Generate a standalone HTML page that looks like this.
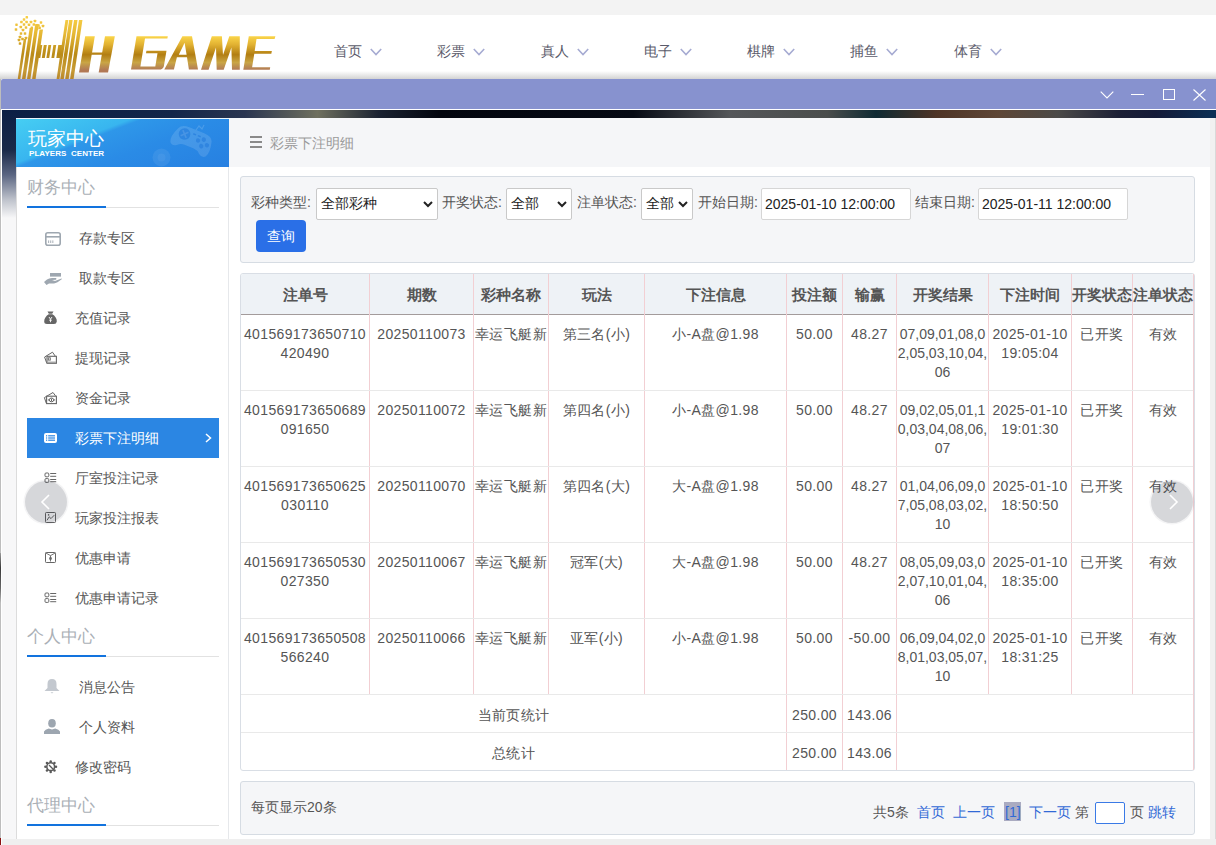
<!DOCTYPE html>
<html><head><meta charset="utf-8"><style>
*{box-sizing:border-box}
html,body{margin:0;padding:0}
body{width:1216px;height:845px;overflow:hidden;position:relative;background:#f3f3f3;font-family:"Liberation Sans",sans-serif;font-size:14px;color:#555}
.a{position:absolute}
.t{position:absolute;white-space:nowrap;line-height:19px}
.nav{color:#5b5b6b;font-size:14px}
.side{color:#555;font-size:14px}
.sec{color:#aab0b6;font-size:17px;line-height:22px}
.lbl{color:#555;font-size:14px}
.cell{position:absolute;text-align:center;line-height:19px;color:#555;letter-spacing:0.35px}
.hd{position:absolute;text-align:center;font-weight:bold;font-size:15px;color:#555;line-height:19px}
.lnk{color:#3169d6}
svg{position:absolute;overflow:visible}
</style></head><body>
<div class="a" style="left:0px;top:15px;width:1216px;height:64px;background:#fff"></div>
<div class="a" style="left:0px;top:71px;width:1216px;height:8px;background:linear-gradient(#fff,#d3d3d3)"></div>
<svg style="left:0;top:0" width="300" height="80" viewBox="0 0 300 80">
<defs>
<linearGradient id="gt" gradientUnits="userSpaceOnUse" x1="0" y1="36" x2="0" y2="70">
<stop offset="0" stop-color="#fbd64a"/><stop offset="0.25" stop-color="#e2b232"/><stop offset="0.55" stop-color="#b27e12"/><stop offset="0.78" stop-color="#c9a545"/><stop offset="0.92" stop-color="#b98952"/><stop offset="1" stop-color="#b27955"/>
</linearGradient>
<linearGradient id="gh" gradientUnits="userSpaceOnUse" x1="0" y1="17" x2="0" y2="79">
<stop offset="0" stop-color="#f8cf45"/><stop offset="0.3" stop-color="#e3b533"/><stop offset="0.6" stop-color="#b98a17"/><stop offset="0.85" stop-color="#c89c35"/><stop offset="1" stop-color="#b8862a"/>
</linearGradient>
</defs>
<g fill="url(#gh)">
<polygon points="23.7,39 26.3,39 20.3,79 17.7,79"/>
<polygon points="29.65,28 33.15,28 25.5,79 22,79"/>
<polygon points="35.25,24 38.65,24 30.4,79 27,79"/>
<polygon points="39.5,29.6 43,29.6 35.6,79 32.1,79"/>
<polygon points="38.3,45 42.3,45 40.3,58 36.3,58"/>
<polygon points="43.8,45 46.8,45 44.8,58 41.8,58"/>
<polygon points="48.4,45 51.2,45 49.2,58 46.4,58"/>
<polygon points="53.4,45 56.2,45 54.2,58 51.4,58"/>
<polygon points="58.3,45 62.5,45 60.5,58 56.3,58"/>
<polygon points="65.45,20 68.35,20 59.5,79 56.6,79"/>
<polygon points="69.15,20 72.65,20 63.8,79 60.3,79"/>
<polygon points="74.05,20 77.55,20 68.7,79 65.2,79"/>
<polygon points="78.95,20 82.45,20 73.6,79 70.1,79"/>
<g>
<rect x="25.55" y="16.05" width="2.5" height="2.5" rx="0.6"/><rect x="22.75" y="18.35" width="2.5" height="2.5" rx="0.6"/><rect x="20.15" y="20.75" width="2.5" height="2.5" rx="0.6"/><rect x="25.35" y="20.75" width="2.5" height="2.5" rx="0.6"/><rect x="29.75" y="20.75" width="2.5" height="2.5" rx="0.6"/><rect x="33.75" y="19.75" width="2.5" height="2.5" rx="0.6"/><rect x="39.75" y="21.15" width="2.5" height="2.5" rx="0.6"/><rect x="15.25" y="23.45" width="2.5" height="2.5" rx="0.6"/><rect x="22.75" y="23.25" width="2.5" height="2.5" rx="0.6"/><rect x="27.75" y="23.55" width="2.5" height="2.5" rx="0.6"/><rect x="32.55" y="23.25" width="2.5" height="2.5" rx="0.6"/><rect x="19.55" y="25.75" width="2.5" height="2.5" rx="0.6"/><rect x="24.75" y="26.25" width="2.5" height="2.5" rx="0.6"/><rect x="30.55" y="26.45" width="2.5" height="2.5" rx="0.6"/><rect x="41.75" y="24.75" width="2.5" height="2.5" rx="0.6"/><rect x="38.35" y="26.55" width="2.5" height="2.5" rx="0.6"/><rect x="14.75" y="28.25" width="2.5" height="2.5" rx="0.6"/><rect x="21.75" y="28.75" width="2.5" height="2.5" rx="0.6"/><rect x="19.75" y="32.25" width="2.5" height="2.5" rx="0.6"/><rect x="23.75" y="32.25" width="2.5" height="2.5" rx="0.6"/><rect x="18.75" y="35.75" width="2.5" height="2.5" rx="0.6"/><rect x="24.75" y="36.75" width="2.5" height="2.5" rx="0.6"/><rect x="21.25" y="37.75" width="2.5" height="2.5" rx="0.6"/><rect x="17.75" y="38.75" width="2.5" height="2.5" rx="0.6"/><rect x="18.75" y="42.35" width="2.5" height="2.5" rx="0.6"/><rect x="35.75" y="27.75" width="2.5" height="2.5" rx="0.6"/><rect x="37.25" y="24.25" width="2.5" height="2.5" rx="0.6"/></g></g>
<g fill="url(#gt)" fill-rule="evenodd">
<polygon points="85.2,36.2 94.8,36.2 88.7,72.5 79,72.5"/>
<polygon points="105,36.2 114.8,36.2 108,72.5 98.7,72.5"/>
<polygon points="91.5,52.4 104,52.4 103.6,54.8 91.1,54.8"/>
<path d="M136.5,36.2 L167.8,36.2 L167.4,38.6 L145,38.6 L140.4,66.6 L155.3,66.6 L157.5,53.3 L146,53.3 L146.4,50.8 L166.5,50.8 L163.8,66.5 Q163,69.6 159,69.6 L131,69.6 Z"/>
<path d="M182.4,36.2 L192,36.2 L198,69.6 L188.9,69.6 L187,57.3 L176.9,57.3 L173.9,69.6 L164.3,69.6 Z M178.8,54.8 L186.6,54.8 L184.6,42.8 Z"/>
<path d="M201,69.8 L211.8,36.2 L221.9,36.2 L223,55 L229.3,36.2 L239.8,36.2 L239.8,69.8 L232,69.8 L231.4,47.4 L223.7,69.8 L216.7,69.8 L216,47.4 L208.6,69.8 Z"/>
<path d="M248.8,36.2 L275.4,36.2 L274.6,39 L256.5,39 L254.7,50.9 L271.9,50.9 L271.3,53.7 L254.3,53.7 L252.1,67.3 L270.2,67.3 L269.8,69.8 L243.3,69.8 Z"/>
</g>
</svg>
<div class="t nav" style="left:334px;top:42px;">首页</div>
<svg style="left:370px;top:48px" width="12" height="8" viewBox="0 0 12 8"><path d="M0.8 1 L6 6.5 L11.2 1" fill="none" stroke="#a6abd2" stroke-width="1.6"/></svg>
<div class="t nav" style="left:437px;top:42px;">彩票</div>
<svg style="left:473px;top:48px" width="12" height="8" viewBox="0 0 12 8"><path d="M0.8 1 L6 6.5 L11.2 1" fill="none" stroke="#a6abd2" stroke-width="1.6"/></svg>
<div class="t nav" style="left:541px;top:42px;">真人</div>
<svg style="left:577px;top:48px" width="12" height="8" viewBox="0 0 12 8"><path d="M0.8 1 L6 6.5 L11.2 1" fill="none" stroke="#a6abd2" stroke-width="1.6"/></svg>
<div class="t nav" style="left:644px;top:42px;">电子</div>
<svg style="left:680px;top:48px" width="12" height="8" viewBox="0 0 12 8"><path d="M0.8 1 L6 6.5 L11.2 1" fill="none" stroke="#a6abd2" stroke-width="1.6"/></svg>
<div class="t nav" style="left:747px;top:42px;">棋牌</div>
<svg style="left:783px;top:48px" width="12" height="8" viewBox="0 0 12 8"><path d="M0.8 1 L6 6.5 L11.2 1" fill="none" stroke="#a6abd2" stroke-width="1.6"/></svg>
<div class="t nav" style="left:850px;top:42px;">捕鱼</div>
<svg style="left:886px;top:48px" width="12" height="8" viewBox="0 0 12 8"><path d="M0.8 1 L6 6.5 L11.2 1" fill="none" stroke="#a6abd2" stroke-width="1.6"/></svg>
<div class="t nav" style="left:954px;top:42px;">体育</div>
<svg style="left:990px;top:48px" width="12" height="8" viewBox="0 0 12 8"><path d="M0.8 1 L6 6.5 L11.2 1" fill="none" stroke="#a6abd2" stroke-width="1.6"/></svg>
<div class="a" style="left:0px;top:79px;width:1px;height:766px;background:#bdbdbd"></div>
<div class="a" style="left:1px;top:79px;width:1215px;height:766px;background:#fff;border-top-left-radius:2px"></div>
<div class="a" style="left:1px;top:79px;width:1215px;height:30px;background:#8792cf;border-top-left-radius:2px"></div>
<svg style="left:1100px;top:91px" width="14" height="8" viewBox="0 0 14 8"><path d="M0.7 0.7 L7 7 L13.3 0.7" fill="none" stroke="#fff" stroke-width="1.1"/></svg>
<div class="a" style="left:1131px;top:94px;width:13px;height:1px;background:#fff"></div>
<div class="a" style="left:1163px;top:89px;width:12px;height:11px;border:1.2px solid #fff"></div>
<svg style="left:1193px;top:89px" width="13" height="12" viewBox="0 0 13 12"><path d="M0.5 0.5 L12.5 11.5 M12.5 0.5 L0.5 11.5" fill="none" stroke="#fff" stroke-width="1.1"/></svg>
<div class="a" style="left:2px;top:110px;width:1214px;height:735px;background:#f7f7f8"></div>
<div class="a" style="left:2px;top:110px;width:1214px;height:8px;background:linear-gradient(90deg,#0b1f44 0%,#13264a 14%,#2a3550 20%,#6f705f 26%,#1b2332 31%,#03060f 36%,#060a14 52%,#55575a 60%,#4a4d4c 68%,#0f2a33 72%,#4e3426 77%,#5e4636 82%,#4b4a48 87%,#1c2036 92%,#141a38 95%,#0a2f55 100%)"></div>
<div class="a" style="left:2px;top:110px;width:14px;height:110px;background:linear-gradient(#0b1f44 0px,#1a2948 40px,#5b6682 65px,#bfc3cc 90px,#f7f7f8 108px)"></div>
<div class="a" style="left:1210px;top:110px;width:6px;height:8px;background:#0a2f55"></div>
<div class="a" style="left:1210px;top:118px;width:6px;height:721px;background:#f1f1f1;border-right:1px solid #d9d9d9"></div>
<div class="a" style="left:0px;top:838px;width:1px;height:7px;background:#8a1010"></div>
<div class="a" style="left:0px;top:553px;width:1px;height:50px;background:linear-gradient(#9a9a9a,#3a3a3a 30%,#666 70%,#bdbdbd)"></div>
<div class="a" style="left:2px;top:839px;width:1214px;height:6px;background:#efefef"></div>
<div class="a" style="left:16px;top:118px;width:213px;height:721px;background:#fff;border-left:1px solid #dcdcdc;border-right:1px solid #e6e8eb"></div>
<div class="a" style="left:16px;top:118px;width:213px;height:49px;background:linear-gradient(159deg,#46cef3 0%,#38b5ef 34%,#2e97e9 37.5%,#2a8be6 60%,#2780e1 100%);border-top:1px solid #e9f4fb"></div>
<svg style="left:140px;top:119px" width="89" height="48" viewBox="140 119 89 48">
<g transform="translate(-2 3)"><g transform="rotate(22 193 139)">
<path d="M176,131 Q178,126 186,126 L202,126 Q210,126 212,131 Q215,142 212,147 Q209,150 205,147 Q202,144 198,144 L188,144 Q184,144 181,147 Q177,150 174,147 Q171,142 176,131 Z" fill="rgba(255,255,255,0.13)"/>
<circle cx="184" cy="134" r="5.8" fill="rgba(20,110,215,0.45)"/>
<path d="M181,131 L187,137 M187,131 L181,137" stroke="rgba(255,255,255,0.12)" stroke-width="1.6"/>
<path d="M192,130.5 L195,130.5 M197,130.5 L200,130.5" stroke="rgba(20,110,215,0.45)" stroke-width="1.6"/>
<circle cx="204" cy="132" r="2.2" fill="rgba(20,110,215,0.4)"/><circle cx="209" cy="136" r="2.2" fill="rgba(20,110,215,0.4)"/>
<circle cx="204" cy="139" r="2.2" fill="rgba(20,110,215,0.4)"/><circle cx="199" cy="135" r="2.2" fill="rgba(20,110,215,0.4)"/>
</g>
<path d="M198,127 L201,123 L204,126 L206,122" fill="none" stroke="rgba(255,255,255,0.15)" stroke-width="1.2"/></g>
<circle cx="161.5" cy="157.5" r="9" fill="rgba(255,255,255,0.07)"/>
<circle cx="161.5" cy="157.5" r="4" fill="rgba(255,255,255,0.05)"/>
</svg>
<div class="t " style="left:28px;top:128px;color:#fff;font-size:19px;line-height:22px">玩家中心</div>
<div class="t " style="left:29px;top:149px;color:#fff;font-size:8px;line-height:9px;letter-spacing:0.05px;font-weight:bold">PLAYERS&nbsp;&nbsp;CENTER</div>
<div class="t sec" style="left:27px;top:177px;">财务中心</div>
<div class="a" style="left:27px;top:207px;width:192px;height:1px;background:#e2e2e2"></div>
<div class="a" style="left:27px;top:206px;width:79px;height:2px;background:#1273de"></div>
<div class="t side" style="left:79px;top:229px;">存款专区</div>
<svg style="left:45px;top:232px" width="16" height="14" viewBox="0 0 16 14"><rect x="0.8" y="0.8" width="14.4" height="12.4" rx="2" fill="none" stroke="#9ea7b0" stroke-width="1.6"/><rect x="0.8" y="4" width="14.4" height="1.6" fill="#9ea7b0"/><rect x="3.2" y="8.4" width="0.9" height="2.6" fill="#9ea7b0"/><rect x="5.3" y="8.4" width="0.9" height="2.6" fill="#9ea7b0"/><rect x="7.4" y="8.4" width="0.9" height="2.6" fill="#9ea7b0"/></svg>
<div class="t side" style="left:79px;top:269px;">取款专区</div>
<svg style="left:44px;top:273px" width="18" height="12" viewBox="0 0 18 12"><rect x="6" y="0" width="11" height="3.6" fill="#9ea7b0"/><path d="M0,9 L3,6.5 Q5,5 8,5 L12,5 Q13,5.5 12,6.8 L8,7 L11,8 L17.5,5.5 L18,6 Q13,10 10,10.5 L5,10.5 L2.5,12 Z" fill="#9ea7b0"/></svg>
<div class="t side" style="left:75px;top:309px;">充值记录</div>
<svg style="left:44px;top:311px" width="13" height="13" viewBox="0 0 13 13"><path d="M3.5,0.5 L9.5,0.5 L8,3 Q13,6 12.8,10.5 Q12.5,13 10,13 L3,13 Q0.2,13 0.2,10.5 Q0.2,6 5,3 Z" fill="#666"/><path d="M5,6 L6.5,8.2 L8,6 M6.5,8.2 L6.5,11.2 M5.2,9.2 L7.8,9.2" fill="none" stroke="#fff" stroke-width="0.9"/><rect x="4.6" y="2.7" width="3.8" height="0.6" fill="#ddd"/></svg>
<div class="t side" style="left:75px;top:349px;">提现记录</div>
<svg style="left:44px;top:351px" width="13" height="13" viewBox="0 0 13 13"><path d="M2.6,11.8 L0.6,6 L8.5,1.2 L11.2,5" fill="none" stroke="#666" stroke-width="1"/><rect x="3" y="5.3" width="9.4" height="7" fill="#fff" stroke="#666" stroke-width="1.1"/><rect x="4.3" y="6.8" width="2" height="2.3" fill="none" stroke="#666" stroke-width="0.9"/><rect x="3.5" y="10.6" width="8.4" height="1.2" fill="#999"/></svg>
<div class="t side" style="left:75px;top:389px;">资金记录</div>
<svg style="left:44px;top:392px" width="13" height="12" viewBox="0 0 13 12"><path d="M2.4,11.5 L0.4,5.6 L9,0.5 L11.5,3.8" fill="none" stroke="#666" stroke-width="1"/><rect x="2.6" y="4.2" width="9.8" height="7.4" fill="#fff" stroke="#666" stroke-width="1.1"/><ellipse cx="7.5" cy="7.9" rx="2.2" ry="1.9" fill="none" stroke="#666" stroke-width="1"/><rect x="7" y="6.6" width="1" height="2.6" fill="#666"/><circle cx="4.4" cy="7.9" r="0.6" fill="#666"/><circle cx="10.6" cy="7.9" r="0.6" fill="#666"/></svg>
<div class="a" style="left:27px;top:418px;width:192px;height:40px;background:#2b86e3"></div>
<div class="t side" style="left:75px;top:429px;color:#fff">彩票下注明细</div>
<svg style="left:205px;top:433px" width="7" height="10" viewBox="0 0 7 10"><path d="M1 1 L5.5 5 L1 9" fill="none" stroke="#fff" stroke-width="1.5"/></svg>
<svg style="left:44px;top:433px" width="13" height="10" viewBox="0 0 13 10"><rect x="0" y="0" width="13" height="10" rx="2" fill="#fff"/><rect x="2" y="2.2" width="1.2" height="1.2" fill="#2b86e3"/><rect x="2" y="4.4" width="1.2" height="1.2" fill="#2b86e3"/><rect x="2" y="6.6" width="1.2" height="1.2" fill="#2b86e3"/><rect x="4.2" y="2.2" width="6.8" height="1.2" fill="#2b86e3"/><rect x="4.2" y="4.4" width="6.8" height="1.2" fill="#2b86e3"/><rect x="4.2" y="6.6" width="6.8" height="1.2" fill="#2b86e3"/></svg>
<div class="t side" style="left:75px;top:469px;">厅室投注记录</div>
<svg style="left:44px;top:472px" width="13" height="11" viewBox="0 0 13 11"><rect x="1" y="1" width="3.8" height="3.8" rx="1" fill="none" stroke="#666" stroke-width="1"/><rect x="1" y="6.6" width="3.8" height="3.8" rx="1" fill="none" stroke="#666" stroke-width="1"/><rect x="6.2" y="1" width="6" height="1" fill="#666"/><rect x="6.2" y="3.8" width="6" height="1" fill="#666"/><rect x="6.2" y="7" width="6" height="1" fill="#666"/><rect x="6.2" y="9.2" width="6" height="1" fill="#666"/></svg>
<div class="t side" style="left:75px;top:509px;">玩家投注报表</div>
<svg style="left:45px;top:512px" width="11" height="11" viewBox="0 0 11 11"><rect x="0.5" y="0.5" width="10" height="10" rx="0.8" fill="none" stroke="#666" stroke-width="1"/><path d="M2,8.3 L4.2,4.8 L6,6.6 L9.2,3.2" fill="none" stroke="#666" stroke-width="1"/><circle cx="3.6" cy="2.9" r="0.8" fill="#666"/></svg>
<div class="t side" style="left:75px;top:549px;">优惠申请</div>
<svg style="left:45px;top:552px" width="11" height="11" viewBox="0 0 11 11"><rect x="0.5" y="0.5" width="10" height="10" rx="0.8" fill="none" stroke="#666" stroke-width="1"/><path d="M0.8,1 L5.5,3.6 L10.2,1 M5.5,3.6 L5.5,9.5" fill="none" stroke="#666" stroke-width="0.9"/><ellipse cx="5.5" cy="6.4" rx="1.3" ry="1.7" fill="#666"/></svg>
<div class="t side" style="left:75px;top:589px;">优惠申请记录</div>
<svg style="left:44px;top:592px" width="13" height="11" viewBox="0 0 13 11"><rect x="1" y="1" width="3.8" height="3.8" rx="1" fill="none" stroke="#666" stroke-width="1"/><rect x="1" y="6.6" width="3.8" height="3.8" rx="1" fill="none" stroke="#666" stroke-width="1"/><rect x="6.2" y="1" width="6" height="1" fill="#666"/><rect x="6.2" y="3.8" width="6" height="1" fill="#666"/><rect x="6.2" y="7" width="6" height="1" fill="#666"/><rect x="6.2" y="9.2" width="6" height="1" fill="#666"/></svg>
<div class="t sec" style="left:27px;top:626px;">个人中心</div>
<div class="a" style="left:27px;top:656px;width:192px;height:1px;background:#e2e2e2"></div>
<div class="a" style="left:27px;top:655px;width:79px;height:2px;background:#1273de"></div>
<div class="t side" style="left:79px;top:678px;">消息公告</div>
<svg style="left:44px;top:679px" width="16" height="15" viewBox="0 0 16 15"><path d="M8,0 Q12.5,0 12.5,5 L12.5,9 L15.5,12 L0.5,12 L3.5,9 L3.5,5 Q3.5,0 8,0 Z" fill="#c3c8cf"/><path d="M6.5,13.3 L9.5,13.3 L8,14.6 Z" fill="#c3c8cf"/></svg>
<div class="t side" style="left:79px;top:718px;">个人资料</div>
<svg style="left:44px;top:719px" width="16" height="15" viewBox="0 0 16 15"><ellipse cx="8" cy="4.2" rx="3.8" ry="4.3" fill="#9da6b0"/><path d="M0,15 L0,12.5 Q1,10.5 4.8,9.6 Q8,11.2 11.2,9.6 Q15,10.5 16,12.5 L16,15 Z" fill="#9da6b0"/></svg>
<div class="t side" style="left:75px;top:758px;">修改密码</div>
<svg style="left:44px;top:760px" width="14" height="14" viewBox="0 0 14 14"><g fill="#5a5a5a"><circle cx="12.00" cy="6.70" r="1.25"/><circle cx="10.45" cy="10.45" r="1.25"/><circle cx="6.70" cy="12.00" r="1.25"/><circle cx="2.95" cy="10.45" r="1.25"/><circle cx="1.40" cy="6.70" r="1.25"/><circle cx="2.95" cy="2.95" r="1.25"/><circle cx="6.70" cy="1.40" r="1.25"/><circle cx="10.45" cy="2.95" r="1.25"/></g><circle cx="6.7" cy="6.7" r="3.9" fill="none" stroke="#5a5a5a" stroke-width="1.6"/><path d="M5,5 L9.2,9.2" stroke="#5a5a5a" stroke-width="1.3"/></svg>
<div class="t sec" style="left:27px;top:795px;">代理中心</div>
<div class="a" style="left:27px;top:825px;width:192px;height:1px;background:#e2e2e2"></div>
<div class="a" style="left:27px;top:824px;width:79px;height:2px;background:#1273de"></div>
<div class="a" style="left:229px;top:118px;width:981px;height:49px;background:#f5f6f8"></div>
<div class="a" style="left:229px;top:167px;width:981px;height:672px;background:#fff"></div>
<div class="a" style="left:250px;top:136px;width:12px;height:2px;background:#8a8a8a"></div>
<div class="a" style="left:250px;top:141px;width:12px;height:2px;background:#8a8a8a"></div>
<div class="a" style="left:250px;top:146px;width:12px;height:2px;background:#8a8a8a"></div>
<div class="t " style="left:270px;top:134px;color:#9a9a9a;font-size:14px">彩票下注明细</div>
<div class="a" style="left:240px;top:176px;width:955px;height:87px;background:#f5f6f8;border:1px solid #d6dce3;border-radius:3px"></div>
<div class="t lbl" style="left:251px;top:193px;">彩种类型:</div>
<div class="t lbl" style="left:442px;top:193px;">开奖状态:</div>
<div class="t lbl" style="left:577px;top:193px;">注单状态:</div>
<div class="t lbl" style="left:698px;top:193px;">开始日期:</div>
<div class="t lbl" style="left:915px;top:193px;">结束日期:</div>
<div class="a" style="left:316px;top:188px;width:122px;height:32px;background:#fff;border:1px solid #c9c9c9;border-radius:2px"></div>
<div class="t " style="left:321px;top:194px;color:#222;font-size:14px">全部彩种</div>
<svg style="left:423px;top:201px" width="10" height="7" viewBox="0 0 10 7"><path d="M1 1 L5 5 L9 1" fill="none" stroke="#222" stroke-width="2"/></svg>
<div class="a" style="left:506px;top:188px;width:66px;height:32px;background:#fff;border:1px solid #c9c9c9;border-radius:2px"></div>
<div class="t " style="left:511px;top:194px;color:#222;font-size:14px">全部</div>
<svg style="left:557px;top:201px" width="10" height="7" viewBox="0 0 10 7"><path d="M1 1 L5 5 L9 1" fill="none" stroke="#222" stroke-width="2"/></svg>
<div class="a" style="left:641px;top:188px;width:52px;height:32px;background:#fff;border:1px solid #c9c9c9;border-radius:2px"></div>
<div class="t " style="left:646px;top:194px;color:#222;font-size:14px">全部</div>
<svg style="left:678px;top:201px" width="10" height="7" viewBox="0 0 10 7"><path d="M1 1 L5 5 L9 1" fill="none" stroke="#222" stroke-width="2"/></svg>
<div class="a" style="left:761px;top:188px;width:150px;height:32px;background:#fff;border:1px solid #d6d6d6;border-radius:2px"></div>
<div class="t " style="left:765px;top:195px;color:#222;font-size:14px">2025-01-10 12:00:00</div>
<div class="a" style="left:978px;top:188px;width:150px;height:32px;background:#fff;border:1px solid #d6d6d6;border-radius:2px"></div>
<div class="t " style="left:982px;top:195px;color:#222;font-size:14px">2025-01-11 12:00:00</div>
<div class="a" style="left:256px;top:220px;width:50px;height:32px;background:#2a6fe7;border-radius:4px"></div>
<div class="t " style="left:267px;top:227px;color:#fff;font-size:14px">查询</div>
<div class="a" style="left:240px;top:273px;width:955px;height:498px;background:#fff;border:1px solid #d9dee5;border-radius:3px"></div>
<div class="a" style="left:241px;top:274px;width:952px;height:40px;background:#eef2f6;border-top-left-radius:2px;border-top-right-radius:2px"></div>
<div class="a" style="left:241px;top:314px;width:952px;height:1px;background:#a39b9b"></div>
<div class="a" style="left:369px;top:274px;width:1px;height:420px;background:#f2cfd3"></div>
<div class="a" style="left:473px;top:274px;width:1px;height:420px;background:#f2cfd3"></div>
<div class="a" style="left:548px;top:274px;width:1px;height:420px;background:#f2cfd3"></div>
<div class="a" style="left:644px;top:274px;width:1px;height:420px;background:#f2cfd3"></div>
<div class="a" style="left:786px;top:274px;width:1px;height:420px;background:#f2cfd3"></div>
<div class="a" style="left:842px;top:274px;width:1px;height:420px;background:#f2cfd3"></div>
<div class="a" style="left:896px;top:274px;width:1px;height:420px;background:#f2cfd3"></div>
<div class="a" style="left:988px;top:274px;width:1px;height:420px;background:#f2cfd3"></div>
<div class="a" style="left:1071px;top:274px;width:1px;height:420px;background:#f2cfd3"></div>
<div class="a" style="left:1132px;top:274px;width:1px;height:420px;background:#f2cfd3"></div>
<div class="a" style="left:1193px;top:274px;width:1px;height:420px;background:#f2cfd3"></div>
<div class="a" style="left:786px;top:694px;width:1px;height:76px;background:#f2cfd3"></div>
<div class="a" style="left:842px;top:694px;width:1px;height:76px;background:#f2cfd3"></div>
<div class="a" style="left:896px;top:694px;width:1px;height:76px;background:#f2cfd3"></div>
<div class="a" style="left:1193px;top:694px;width:1px;height:76px;background:#f2cfd3"></div>
<div class="a" style="left:241px;top:390px;width:952px;height:1px;background:#e9e9e9"></div>
<div class="a" style="left:241px;top:466px;width:952px;height:1px;background:#e9e9e9"></div>
<div class="a" style="left:241px;top:542px;width:952px;height:1px;background:#e9e9e9"></div>
<div class="a" style="left:241px;top:618px;width:952px;height:1px;background:#e9e9e9"></div>
<div class="a" style="left:241px;top:694px;width:952px;height:1px;background:#e9e9e9"></div>
<div class="a" style="left:241px;top:732px;width:952px;height:1px;background:#e9e9e9"></div>
<div class="hd" style="left:241px;top:285px;width:128px">注单号</div>
<div class="hd" style="left:370px;top:285px;width:103px">期数</div>
<div class="hd" style="left:474px;top:285px;width:74px">彩种名称</div>
<div class="hd" style="left:549px;top:285px;width:95px">玩法</div>
<div class="hd" style="left:645px;top:285px;width:141px">下注信息</div>
<div class="hd" style="left:787px;top:285px;width:55px">投注额</div>
<div class="hd" style="left:843px;top:285px;width:53px">输赢</div>
<div class="hd" style="left:897px;top:285px;width:91px">开奖结果</div>
<div class="hd" style="left:989px;top:285px;width:82px">下注时间</div>
<div class="hd" style="left:1072px;top:285px;width:60px">开奖状态</div>
<div class="hd" style="left:1133px;top:285px;width:60px">注单状态</div>
<div class="cell" style="left:241px;top:325px;width:128px;">401569173650710<br>420490</div>
<div class="cell" style="left:370px;top:325px;width:103px;">20250110073</div>
<div class="cell" style="left:474px;top:325px;width:74px;">幸运飞艇新</div>
<div class="cell" style="left:549px;top:325px;width:95px;">第三名(小)</div>
<div class="cell" style="left:645px;top:325px;width:141px;">小-A盘@1.98</div>
<div class="cell" style="left:787px;top:325px;width:55px;">50.00</div>
<div class="cell" style="left:843px;top:325px;width:53px;">48.27</div>
<div class="cell" style="left:897px;top:325px;width:91px;letter-spacing:0;">07,09,01,08,0<br>2,05,03,10,04,<br>06</div>
<div class="cell" style="left:989px;top:325px;width:82px;">2025-01-10<br>19:05:04</div>
<div class="cell" style="left:1072px;top:325px;width:60px;">已开奖</div>
<div class="cell" style="left:1133px;top:325px;width:60px;">有效</div>
<div class="cell" style="left:241px;top:401px;width:128px;">401569173650689<br>091650</div>
<div class="cell" style="left:370px;top:401px;width:103px;">20250110072</div>
<div class="cell" style="left:474px;top:401px;width:74px;">幸运飞艇新</div>
<div class="cell" style="left:549px;top:401px;width:95px;">第四名(小)</div>
<div class="cell" style="left:645px;top:401px;width:141px;">小-A盘@1.98</div>
<div class="cell" style="left:787px;top:401px;width:55px;">50.00</div>
<div class="cell" style="left:843px;top:401px;width:53px;">48.27</div>
<div class="cell" style="left:897px;top:401px;width:91px;letter-spacing:0;">09,02,05,01,1<br>0,03,04,08,06,<br>07</div>
<div class="cell" style="left:989px;top:401px;width:82px;">2025-01-10<br>19:01:30</div>
<div class="cell" style="left:1072px;top:401px;width:60px;">已开奖</div>
<div class="cell" style="left:1133px;top:401px;width:60px;">有效</div>
<div class="cell" style="left:241px;top:477px;width:128px;">401569173650625<br>030110</div>
<div class="cell" style="left:370px;top:477px;width:103px;">20250110070</div>
<div class="cell" style="left:474px;top:477px;width:74px;">幸运飞艇新</div>
<div class="cell" style="left:549px;top:477px;width:95px;">第四名(大)</div>
<div class="cell" style="left:645px;top:477px;width:141px;">大-A盘@1.98</div>
<div class="cell" style="left:787px;top:477px;width:55px;">50.00</div>
<div class="cell" style="left:843px;top:477px;width:53px;">48.27</div>
<div class="cell" style="left:897px;top:477px;width:91px;letter-spacing:0;">01,04,06,09,0<br>7,05,08,03,02,<br>10</div>
<div class="cell" style="left:989px;top:477px;width:82px;">2025-01-10<br>18:50:50</div>
<div class="cell" style="left:1072px;top:477px;width:60px;">已开奖</div>
<div class="cell" style="left:1133px;top:477px;width:60px;">有效</div>
<div class="cell" style="left:241px;top:553px;width:128px;">401569173650530<br>027350</div>
<div class="cell" style="left:370px;top:553px;width:103px;">20250110067</div>
<div class="cell" style="left:474px;top:553px;width:74px;">幸运飞艇新</div>
<div class="cell" style="left:549px;top:553px;width:95px;">冠军(大)</div>
<div class="cell" style="left:645px;top:553px;width:141px;">大-A盘@1.98</div>
<div class="cell" style="left:787px;top:553px;width:55px;">50.00</div>
<div class="cell" style="left:843px;top:553px;width:53px;">48.27</div>
<div class="cell" style="left:897px;top:553px;width:91px;letter-spacing:0;">08,05,09,03,0<br>2,07,10,01,04,<br>06</div>
<div class="cell" style="left:989px;top:553px;width:82px;">2025-01-10<br>18:35:00</div>
<div class="cell" style="left:1072px;top:553px;width:60px;">已开奖</div>
<div class="cell" style="left:1133px;top:553px;width:60px;">有效</div>
<div class="cell" style="left:241px;top:629px;width:128px;">401569173650508<br>566240</div>
<div class="cell" style="left:370px;top:629px;width:103px;">20250110066</div>
<div class="cell" style="left:474px;top:629px;width:74px;">幸运飞艇新</div>
<div class="cell" style="left:549px;top:629px;width:95px;">亚军(小)</div>
<div class="cell" style="left:645px;top:629px;width:141px;">小-A盘@1.98</div>
<div class="cell" style="left:787px;top:629px;width:55px;">50.00</div>
<div class="cell" style="left:843px;top:629px;width:53px;">-50.00</div>
<div class="cell" style="left:897px;top:629px;width:91px;letter-spacing:0;">06,09,04,02,0<br>8,01,03,05,07,<br>10</div>
<div class="cell" style="left:989px;top:629px;width:82px;">2025-01-10<br>18:31:25</div>
<div class="cell" style="left:1072px;top:629px;width:60px;">已开奖</div>
<div class="cell" style="left:1133px;top:629px;width:60px;">有效</div>
<div class="cell" style="left:241px;top:706px;width:545px">当前页统计</div>
<div class="cell" style="left:787px;top:706px;width:55px">250.00</div>
<div class="cell" style="left:843px;top:706px;width:53px">143.06</div>
<div class="cell" style="left:241px;top:744px;width:545px">总统计</div>
<div class="cell" style="left:787px;top:744px;width:55px">250.00</div>
<div class="cell" style="left:843px;top:744px;width:53px">143.06</div>
<div class="a" style="left:240px;top:781px;width:955px;height:54px;background:#f5f6f8;border:1px solid #d6dce3;border-radius:3px"></div>
<div class="t " style="left:251px;top:798px;color:#555">每页显示20条</div>
<div class="t " style="left:873px;top:803px;color:#555">共5条</div>
<div class="t lnk" style="left:917px;top:803px;">首页</div>
<div class="t lnk" style="left:953px;top:803px;">上一页</div>
<div class="a" style="left:1004px;top:802px;width:17px;height:19px;background:#aaabc1"></div>
<div class="t lnk" style="left:1005px;top:803px;">[1]</div>
<div class="t lnk" style="left:1029px;top:803px;">下一页</div>
<div class="t " style="left:1075px;top:803px;color:#555">第</div>
<div class="a" style="left:1095px;top:802px;width:30px;height:22px;background:#fff;border:1px solid #3a7ae6;border-radius:2px"></div>
<div class="t " style="left:1130px;top:803px;color:#555">页</div>
<div class="t lnk" style="left:1148px;top:803px;">跳转</div>
<div class="a" style="left:25px;top:481px;width:42px;height:42px;border-radius:50%;background:rgba(30,35,50,0.18);box-shadow:0 0 0 1.5px rgba(30,35,50,0.05)"></div>
<svg style="left:40px;top:494px" width="10" height="16" viewBox="0 0 10 16"><path d="M9 1 L2 8 L9 15" fill="none" stroke="#fff" stroke-width="1.6"/></svg>
<div class="a" style="left:1151px;top:481px;width:42px;height:42px;border-radius:50%;background:rgba(30,35,50,0.18);box-shadow:0 0 0 1.5px rgba(30,35,50,0.05)"></div>
<svg style="left:1169px;top:494px" width="10" height="16" viewBox="0 0 10 16"><path d="M1 1 L8 8 L1 15" fill="none" stroke="#fff" stroke-width="1.6"/></svg>
</body></html>
